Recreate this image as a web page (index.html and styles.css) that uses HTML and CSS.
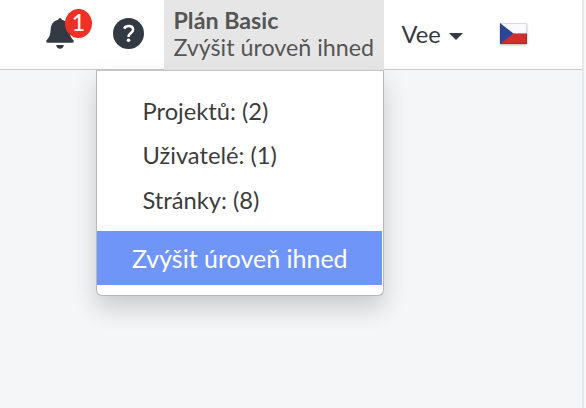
FILE: index.html
```html
<!DOCTYPE html>
<html lang="cs">
<head>
<meta charset="utf-8">
<title>Plán Basic</title>
<link rel="stylesheet" href="styles.css">
</head>
<body>
<div class="page">
  <header class="bar">
    <div class="bell">
      <svg width="28" height="32" viewBox="0 0 28 32"><path fill="#343a43" d="M14 0c1 0 1.600.7 1.700 1.800 4.800 1 7.300 4.500 7.600 9.200.3 6.200 1.600 8.500 4.100 11.200.8 1 .3 2.500-1.100 2.500H1.700c-1.400 0-1.900-1.500-1.100-2.500C3.100 19.500 4.400 17.200 4.700 11c.3-4.700 2.800-8.200 7.600-9.200C12.400.7 13 0 14 0zM10.200 27h7.600c-.2 2.400-1.700 3.800-3.800 3.800s-3.600-1.400-3.800-3.800z"/></svg>
      <span class="badge">1</span>
    </div>
    <div class="help">
      <svg width="31" height="31" viewBox="0 0 31 31"><circle cx="15.500" cy="15.500" r="15.500" fill="#343a43"/><path d="M11.100 10.600C12 8.900 13.600 8 15.700 8c2.700 0 4.400 1.500 4.400 3.800 0 3.400-4.500 3.200-4.500 6.300v.8" fill="none" stroke="#fff" stroke-width="2.500"/><circle cx="15.500" cy="22.300" r="1.800" fill="#fff"/></svg>
    </div>
    <div class="plan">
      <strong class="plan-name">Plán Basic</strong>
      <span class="plan-link">Zvýšit úroveň ihned</span>
      <div class="menu">
        <ul class="limits">
          <li>Projektů: (2)</li>
          <li>Uživatelé: (1)</li>
          <li>Stránky: (8)</li>
        </ul>
        <a class="upgrade">Zvýšit úroveň ihned</a>
      </div>
    </div>
    <div class="user">Vee<span class="caret"></span></div>
    <svg class="flag" width="27" height="21" viewBox="0 0 27 21"><path fill="#fafafc" d="M0 0h27v10.500H0z"/><path fill="#d22f2c" d="M0 10.500h27V21H0z"/><path fill="#2c4596" d="M0 0l13.500 10.500L0 21z"/><path fill="none" stroke="#000" stroke-opacity=".12" d="M.5.5h26v20H.5z"/></svg>
  </header>
</div>
</body>
</html>
```
FILE: styles.css
```css
* { box-sizing: border-box; }
body {
  margin: 0;
  height: 408px;
  overflow: hidden;
  background: #f8f8f8;
  font-family: Lato, "Liberation Sans", sans-serif;
  color: #343a43;
}
.page {
  width: 584px;
  height: 408px;
  background: #f5f6f7;
  border-right: 2px solid #e8e8e8;
}
.bar {
  display: flex;
  height: 70px;
  background: #fff;
  border-bottom: 1px solid #cacaca;
}
.bell {
  position: relative;
  margin: 18px 0 0 46px;
  width: 28px;
}
.bell svg, .help svg { display: block; }
.badge {
  position: absolute;
  left: 19px;
  top: -9px;
  width: 27px;
  height: 29px;
  border-radius: 50%;
  background: #ee3124;
  color: #fff;
  font-size: 23px;
  font-weight: 500;
  line-height: 26px;
  text-align: center;
}
.help { margin: 18px 0 0 39px; }
.plan {
  position: relative;
  width: 220px;
  height: 70px;
  margin-left: 20px;
  padding: 7px 0 0 9.500px;
  background: #e6e6e6;
  color: #555;
  font-size: 23.250px;
  line-height: 27px;
  white-space: nowrap;
}
.plan-name, .plan-link { display: block; }
.menu {
  position: absolute;
  top: 70px;
  left: -68px;
  width: 288px;
  height: 226px;
  padding-top: 18px;
  background: #fff;
  border: 1px solid #b8b9ba;
  border-top-color: #c4c4c4;
  border-radius: 0 0 6px 6px;
  box-shadow: 0 12px 24px rgba(0, 0, 0, .18);
  color: #3c3c3c;
}
.limits {
  margin: 0;
  padding: 0 0 0 45.500px;
  list-style: none;
  font-size: 23.700px;
  line-height: 44.400px;
}
.upgrade {
  display: block;
  width: 285px;
  height: 54px;
  margin-top: 8.800px;
  padding-left: 35px;
  background: #6f95f8;
  color: #fff;
  font-size: 25px;
  line-height: 54px;
}
.user {
  display: flex;
  align-items: center;
  width: 62px;
  height: 69px;
  margin-left: 17.500px;
  padding-bottom: 2px;
  font-size: 23.700px;
}
.caret {
  margin: 5px 0 0 8px;
  border: 7px solid transparent;
  border-top-color: #343a43;
  border-bottom: 0;
}
.flag {
  margin: 23px 0 0 36.500px;
  filter: drop-shadow(0 1px 1px rgba(0, 0, 0, .3));
}
```
